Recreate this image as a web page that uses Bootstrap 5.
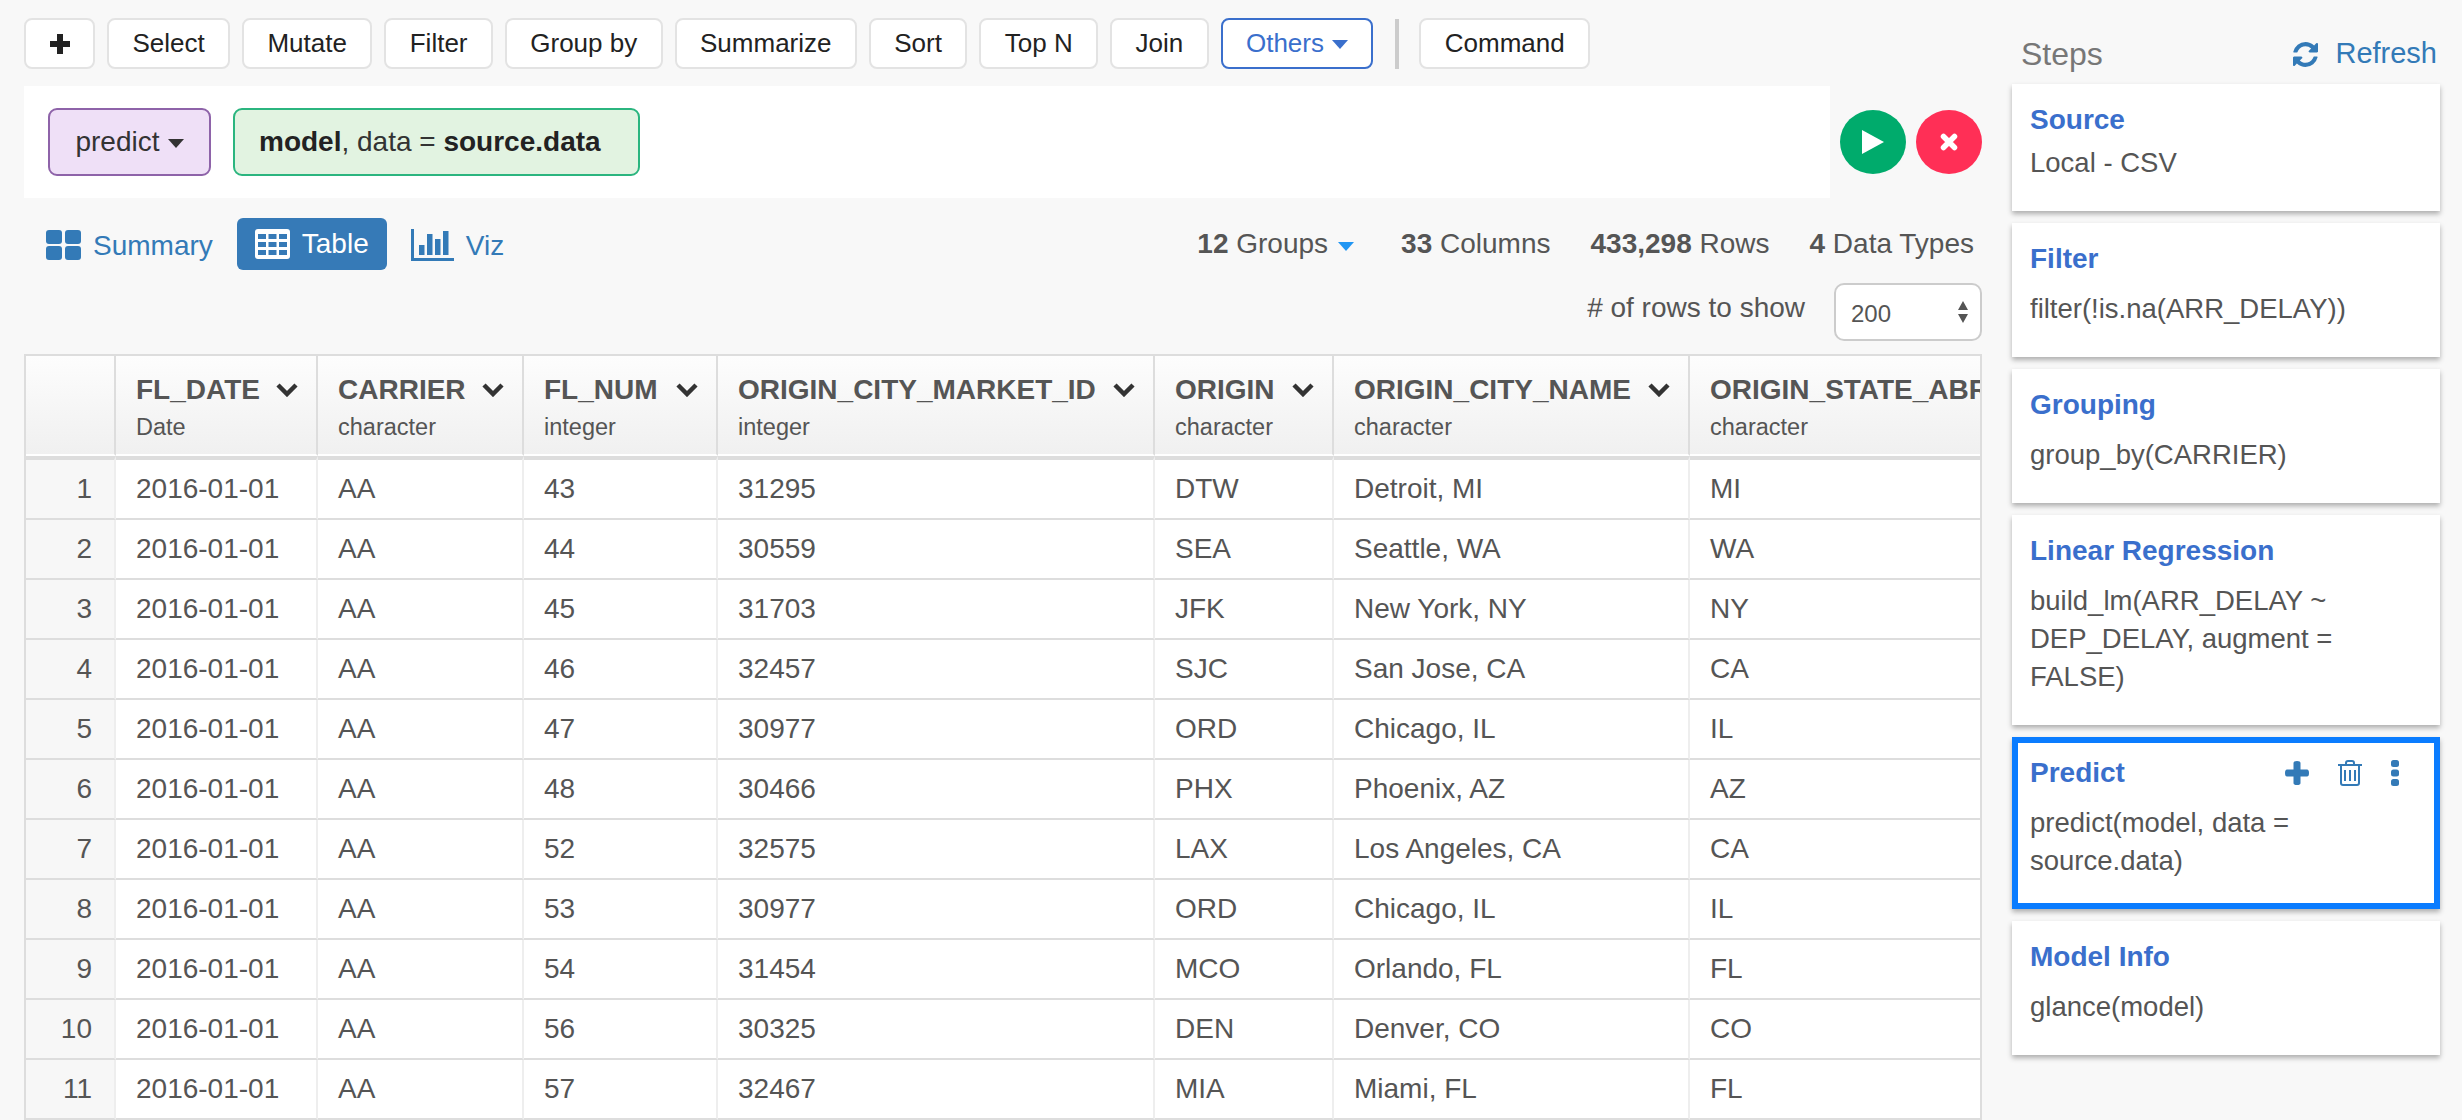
<!DOCTYPE html>
<html lang="en">
<head>
    <meta charset="UTF-8">
    <title>Exploratory - Predict</title>
    <link href="https://cdn.jsdelivr.net/npm/bootstrap@5.3.2/dist/css/bootstrap.min.css" rel="stylesheet">
    <style>
        html, body { height: 100%; }
        body { background: #f8f8f8; color: #555; font-family: "Liberation Sans", Arial, sans-serif; font-size: 28px; overflow: hidden; }
        a { text-decoration: none; }
        .work-area { width: 1958px; margin-left: 24px; flex-shrink: 0; height: 100vh; }

        /* toolbar */
        .tool-row { padding-top: 18px; column-gap: 12px; }
        .tool-btn { height: 51px; padding: 0 23.4px; font-size: 26px; line-height: 47px; color: #222; background: #fff; border: 2px solid #e3e3e3; border-radius: 8px; white-space: nowrap; }
        .tool-btn.plus-btn { width: 71px; padding: 0; }
        .tool-btn.others-btn { color: #3a6fcc; border-color: #3a6fcc; }
        .tool-sep { width: 4px; height: 50px; background: #ccc; margin: 0 8px 0 10px; }
        .dropdown-toggle::after { border-top: 9px solid; border-left: 8px solid transparent; border-right: 8px solid transparent; border-bottom: 0; margin-left: 8px; vertical-align: 3px; }

        /* command box */
        .command-row { margin-top: 17px; }
        .command-box { width: 1806px; height: 112px; background: #fff; padding: 22px 24px; column-gap: 22px; }
        .fn-chip, .arg-chip { height: 68px; font-size: 28px; line-height: 64px; padding: 0; border-radius: 9px; color: #333; }
        .fn-chip { width: 163px; background: #efe0f7; border: 2px solid #8e63a9; }
        .arg-chip { width: 407px; padding-left: 24px; text-align: left; background: #e2f3e1; border: 2px solid #2bb57f; }
        .arg-chip b { color: #222; }
        .round-btn { width: 66px; height: 64px; border-radius: 50%; border: 0; padding: 0; margin-left: 10px; }
        .round-btn.go { background: #00ab6c; }
        .round-btn.stop { background: #ff2f56; }

        /* view tabs + stats */
        .view-row { margin-top: 20px; height: 52px; }
        .view-tabs { margin-left: 4px; column-gap: 6px; }
        .view-tab { height: 52px; padding: 0 18px; color: #337ab7; border-radius: 6px; column-gap: 12px; }
        .view-tab.active-tab { background: #367ab7; color: #fff; }
        .view-tab .low-label { margin-top: 4px; }
        .view-tab .low-icon { margin-top: 2px; }
        .stat-list { padding-right: 8px; column-gap: 40px; }
        .stat-list b { color: #555; }
        .group-stat { margin-right: 7px; }
        .group-stat.dropdown-toggle::after { color: #2196f3; margin-left: 10px; vertical-align: 2px; }
        .rows-row { margin-top: 13px; height: 58px; column-gap: 29px; }
        .rows-select { width: 148px; height: 58px; font-size: 24px; color: #555; padding: 4px 0 0 15px; border: 2px solid #ccc; border-radius: 10px; background-color: #fff; background-size: 12px 22px; background-position: right 11px center; background-image: url("data:image/svg+xml,%3Csvg xmlns='http://www.w3.org/2000/svg' viewBox='0 0 12 22'%3E%3Cpath fill='%23555' d='M6 0l5 9H1zM6 22l-5-9h10z'/%3E%3C/svg%3E"); }

        /* data table */
        .grid-wrap { margin-top: 13px; height: 766px; overflow: hidden; border: 2px solid #ddd; border-bottom: 0; background: #fff; }
        .grid-wrap .data-grid { width: 2064px; margin: 0; table-layout: fixed; border-collapse: separate; border-spacing: 0; --bs-table-bg: transparent; }
        .grid-wrap .data-grid > thead > tr > th { height: 100px; padding: 18px 18px 0 20px; vertical-align: top; white-space: nowrap; font-weight: 400; color: #555; background: linear-gradient(#fdfdfd, #f0f0f0); background-clip: padding-box; border-right: 2px solid #ddd; border-bottom: 2px solid #fff; box-shadow: none; }
        .grid-wrap .data-grid > tbody > tr > td { height: 60px; padding: 0 20px; vertical-align: middle; white-space: nowrap; font-size: 28px; color: #555; background: #fff; border-right: 2px solid #eee; border-bottom: 2px solid #ddd; box-shadow: none; }
        .grid-wrap .data-grid > tbody > tr:first-child > td { height: 64px; border-top: 4px solid #ddd; }
        .grid-wrap .data-grid > tbody > tr > td.row-num { background: #f7f7f7; text-align: right; padding: 0 22px 0 0; }
        .data-grid th:nth-child(1) { width: 90px; }
        .data-grid th:nth-child(2) { width: 202px; }
        .data-grid th:nth-child(3) { width: 206px; }
        .data-grid th:nth-child(4) { width: 194px; }
        .data-grid th:nth-child(5) { width: 437px; }
        .data-grid th:nth-child(6) { width: 179px; }
        .data-grid th:nth-child(7) { width: 356px; }
        .data-grid th:nth-child(8) { width: 400px; }
        .col-name { font-size: 28px; line-height: 32px; font-weight: 700; }
        .col-type { font-size: 23.5px; line-height: 30px; margin-top: 6px; }

        /* steps sidebar */
        .steps-pane { width: 428px; margin-left: 30px; flex-shrink: 0; padding-top: 34px; }
        .steps-head { height: 40px; margin-bottom: 10px; padding: 0 3px 0 9px; }
        .steps-title { font-size: 32px; color: #777; }
        .refresh-link { font-size: 29px; color: #337ab7; column-gap: 17px; }
        .step-card { margin-bottom: 12px; border: 6px solid transparent; border-radius: 0; background: #fff; box-shadow: 0 3px 5px rgba(0, 0, 0, .3); }
        .step-card .card-body { padding: 10px 12px 23px; }
        .step-card.current-step { border-color: #0a7cff; }
        .step-name { font-size: 28px; line-height: 40px; font-weight: 700; color: #3a6fcc; margin: 0; }
        .step-code { font-size: 27.5px; line-height: 38px; color: #555; margin: 11px 0 0; }
        .step-code.close-code { margin-top: 4px; }
        .step-tools { margin-right: 23px; column-gap: 29px; }
    </style>
</head>
<body>
<div class="d-flex">
    <div class="work-area">
        <!-- toolbar -->
        <div class="tool-row d-flex align-items-center">
            <button type="button" class="btn tool-btn plus-btn d-flex align-items-center justify-content-center">
                <svg width="20" height="20" viewBox="0 0 20 20"><path fill="#222" d="M7 0h6v7h7v6h-7v7H7v-7H0V7h7z"/></svg>
            </button>
            <button type="button" class="btn tool-btn">Select</button>
            <button type="button" class="btn tool-btn">Mutate</button>
            <button type="button" class="btn tool-btn">Filter</button>
            <button type="button" class="btn tool-btn">Group by</button>
            <button type="button" class="btn tool-btn">Summarize</button>
            <button type="button" class="btn tool-btn">Sort</button>
            <button type="button" class="btn tool-btn">Top N</button>
            <button type="button" class="btn tool-btn">Join</button>
            <button type="button" class="btn tool-btn others-btn dropdown-toggle">Others</button>
            <div class="tool-sep"></div>
            <button type="button" class="btn tool-btn">Command</button>
        </div>

        <!-- command box -->
        <div class="command-row d-flex align-items-center">
            <div class="command-box d-flex">
                <button type="button" class="btn fn-chip dropdown-toggle">predict</button>
                <button type="button" class="btn arg-chip"><b>model</b>, data = <b>source.data</b></button>
            </div>
            <button type="button" class="round-btn go d-flex align-items-center justify-content-center" aria-label="Run">
                <svg width="22" height="24" viewBox="0 0 22 24"><path fill="#fff" d="M0 0l22 12L0 24z"/></svg>
            </button>
            <button type="button" class="round-btn stop d-flex align-items-center justify-content-center" aria-label="Cancel">
                <svg width="18" height="18" viewBox="0 0 18 18"><path fill="none" stroke="#fff" stroke-width="5.5" stroke-linecap="round" d="M3.5 3.5l11 11M14.5 3.5l-11 11"/></svg>
            </button>
        </div>

        <!-- view tabs and stats -->
        <div class="view-row d-flex justify-content-between align-items-center">
            <div class="view-tabs d-flex">
                <a href="#" class="view-tab d-flex align-items-center">
                    <svg class="low-icon" width="35" height="30" viewBox="0 0 35 30"><g fill="#337ab7"><rect width="16" height="14" rx="3"/><rect x="19" width="16" height="14" rx="3"/><rect y="16" width="16" height="14" rx="3"/><rect x="19" y="16" width="16" height="14" rx="3"/></g></svg>
                    <span class="low-label">Summary</span>
                </a>
                <a href="#" class="view-tab active-tab d-flex align-items-center">
                    <svg width="35" height="30" viewBox="0 0 35 30"><rect width="35" height="30" rx="3" fill="#fff"/><g fill="#367ab7"><rect x="3" y="5" width="8" height="5"/><rect x="13.5" y="5" width="8" height="5"/><rect x="24" y="5" width="8" height="5"/><rect x="3" y="13" width="8" height="5"/><rect x="13.5" y="13" width="8" height="5"/><rect x="24" y="13" width="8" height="5"/><rect x="3" y="21" width="8" height="5"/><rect x="13.5" y="21" width="8" height="5"/><rect x="24" y="21" width="8" height="5"/></g></svg>
                    Table
                </a>
                <a href="#" class="view-tab d-flex align-items-center">
                    <svg class="low-icon" width="43" height="32" viewBox="0 0 43 32"><path fill="#337ab7" d="M0 0h3v29h40v3H0zM8 16h5.500v10H8zM16 5h5.500v21H16zM24 10h5.500v16H24zM32 2h5.500v24H32z"/></svg>
                    <span class="low-label">Viz</span>
                </a>
            </div>
            <div class="stat-list d-flex align-items-center">
                <span class="group-stat dropdown-toggle"><b>12</b> Groups</span>
                <span><b>33</b> Columns</span>
                <span><b>433,298</b> Rows</span>
                <span><b>4</b> Data Types</span>
            </div>
        </div>
        <div class="rows-row d-flex justify-content-end align-items-center">
            <label for="rowsToShow" class="mb-2"># of rows to show</label>
            <select id="rowsToShow" class="form-select rows-select"><option>200</option></select>
        </div>

        <!-- data table -->
        <div class="grid-wrap">
            <table class="table data-grid">
                <thead>
                    <tr>
                        <th></th>
                        <th><div class="col-name d-flex justify-content-between align-items-center">FL_DATE<svg width="22" height="14" viewBox="0 0 22 14"><path fill="none" stroke="#333" stroke-width="4.5" d="M2 2l9 9 9-9"/></svg></div><div class="col-type">Date</div></th>
                        <th><div class="col-name d-flex justify-content-between align-items-center">CARRIER<svg width="22" height="14" viewBox="0 0 22 14"><path fill="none" stroke="#333" stroke-width="4.5" d="M2 2l9 9 9-9"/></svg></div><div class="col-type">character</div></th>
                        <th><div class="col-name d-flex justify-content-between align-items-center">FL_NUM<svg width="22" height="14" viewBox="0 0 22 14"><path fill="none" stroke="#333" stroke-width="4.5" d="M2 2l9 9 9-9"/></svg></div><div class="col-type">integer</div></th>
                        <th><div class="col-name d-flex justify-content-between align-items-center">ORIGIN_CITY_MARKET_ID<svg width="22" height="14" viewBox="0 0 22 14"><path fill="none" stroke="#333" stroke-width="4.5" d="M2 2l9 9 9-9"/></svg></div><div class="col-type">integer</div></th>
                        <th><div class="col-name d-flex justify-content-between align-items-center">ORIGIN<svg width="22" height="14" viewBox="0 0 22 14"><path fill="none" stroke="#333" stroke-width="4.5" d="M2 2l9 9 9-9"/></svg></div><div class="col-type">character</div></th>
                        <th><div class="col-name d-flex justify-content-between align-items-center">ORIGIN_CITY_NAME<svg width="22" height="14" viewBox="0 0 22 14"><path fill="none" stroke="#333" stroke-width="4.5" d="M2 2l9 9 9-9"/></svg></div><div class="col-type">character</div></th>
                        <th><div class="col-name">ORIGIN_STATE_ABR</div><div class="col-type">character</div></th>
                    </tr>
                </thead>
                <tbody>
                    <tr><td class="row-num">1</td><td>2016-01-01</td><td>AA</td><td>43</td><td>31295</td><td>DTW</td><td>Detroit, MI</td><td>MI</td></tr>
                    <tr><td class="row-num">2</td><td>2016-01-01</td><td>AA</td><td>44</td><td>30559</td><td>SEA</td><td>Seattle, WA</td><td>WA</td></tr>
                    <tr><td class="row-num">3</td><td>2016-01-01</td><td>AA</td><td>45</td><td>31703</td><td>JFK</td><td>New York, NY</td><td>NY</td></tr>
                    <tr><td class="row-num">4</td><td>2016-01-01</td><td>AA</td><td>46</td><td>32457</td><td>SJC</td><td>San Jose, CA</td><td>CA</td></tr>
                    <tr><td class="row-num">5</td><td>2016-01-01</td><td>AA</td><td>47</td><td>30977</td><td>ORD</td><td>Chicago, IL</td><td>IL</td></tr>
                    <tr><td class="row-num">6</td><td>2016-01-01</td><td>AA</td><td>48</td><td>30466</td><td>PHX</td><td>Phoenix, AZ</td><td>AZ</td></tr>
                    <tr><td class="row-num">7</td><td>2016-01-01</td><td>AA</td><td>52</td><td>32575</td><td>LAX</td><td>Los Angeles, CA</td><td>CA</td></tr>
                    <tr><td class="row-num">8</td><td>2016-01-01</td><td>AA</td><td>53</td><td>30977</td><td>ORD</td><td>Chicago, IL</td><td>IL</td></tr>
                    <tr><td class="row-num">9</td><td>2016-01-01</td><td>AA</td><td>54</td><td>31454</td><td>MCO</td><td>Orlando, FL</td><td>FL</td></tr>
                    <tr><td class="row-num">10</td><td>2016-01-01</td><td>AA</td><td>56</td><td>30325</td><td>DEN</td><td>Denver, CO</td><td>CO</td></tr>
                    <tr><td class="row-num">11</td><td>2016-01-01</td><td>AA</td><td>57</td><td>32467</td><td>MIA</td><td>Miami, FL</td><td>FL</td></tr>
                </tbody>
            </table>
        </div>
    </div>

    <!-- steps -->
    <div class="steps-pane">
        <div class="steps-head d-flex justify-content-between align-items-center">
            <span class="steps-title">Steps</span>
            <a href="#" class="refresh-link d-flex align-items-center">
                <svg width="25" height="25" viewBox="128 128 1536 1536"><path fill="#337ab7" d="M1639 1056q0 5-1 7-64 268-268 434.5t-478 166.5q-146 0-282.5-55t-243.5-157l-129 129q-19 19-45 19t-45-19-19-45v-448q0-26 19-45t45-19h448q26 0 45 19t19 45-19 45l-137 137q71 66 161 102t187 36q134 0 250-65t186-179q11-17 53-117 8-23 30-23h192q13 0 22.5 9.5t9.5 22.5zm25-800v448q0 26-19 45t-45 19h-448q-26 0-45-19t-19-45 19-45l138-138q-148-137-349-137-134 0-250 65t-186 179q-11 17-53 117-8 23-30 23h-199q-13 0-22.5-9.5t-9.5-22.5v-7q65-268 270-434.5t480-166.5q146 0 284 55.5t245 156.5l130-129q19-19 45-19t45 19 19 45z"/></svg>
                Refresh
            </a>
        </div>
        <div class="card step-card"><div class="card-body"><h5 class="step-name">Source</h5><p class="step-code close-code">Local - CSV</p></div></div>
        <div class="card step-card"><div class="card-body"><h5 class="step-name">Filter</h5><p class="step-code">filter(!is.na(ARR_DELAY))</p></div></div>
        <div class="card step-card"><div class="card-body"><h5 class="step-name">Grouping</h5><p class="step-code">group_by(CARRIER)</p></div></div>
        <div class="card step-card"><div class="card-body"><h5 class="step-name">Linear Regression</h5><p class="step-code">build_lm(ARR_DELAY ~ DEP_DELAY, augment = FALSE)</p></div></div>
        <div class="card step-card current-step">
            <div class="card-body">
                <div class="d-flex justify-content-between align-items-center">
                    <h5 class="step-name">Predict</h5>
                    <div class="step-tools d-flex align-items-center">
                        <svg width="24" height="24" viewBox="0 0 24 24"><path fill="#337ab7" d="M8.500 2q0-2 3.500-2t3.500 2v6.500H22q2 0 2 3.500t-2 3.500h-6.500V22q0 2-3.500 2t-3.500-2v-6.500H2q-2 0-2-3.500t2-3.500h6.500z"/></svg>
                        <svg width="24" height="26" viewBox="0 0 24 26"><g fill="none" stroke="#337ab7" stroke-width="2"><path d="M0 5h24M8 5V3q0-2 2-2h4q2 0 2 2v2M3 5v18q0 2 2 2h14q2 0 2-2V5"/><path d="M7 10v11M12 10v11M17 10v11"/></g></svg>
                        <svg width="8" height="26" viewBox="0 0 8 26"><g fill="#337ab7"><rect width="8" height="7" rx="2.500"/><rect y="9.500" width="8" height="7" rx="2.500"/><rect y="19" width="8" height="7" rx="2.500"/></g></svg>
                    </div>
                </div>
                <p class="step-code">predict(model, data = source.data)</p>
            </div>
        </div>
        <div class="card step-card"><div class="card-body"><h5 class="step-name">Model Info</h5><p class="step-code">glance(model)</p></div></div>
    </div>
</div>
<script src="https://cdn.jsdelivr.net/npm/bootstrap@5.3.2/dist/js/bootstrap.bundle.min.js"></script>
</body>
</html>
